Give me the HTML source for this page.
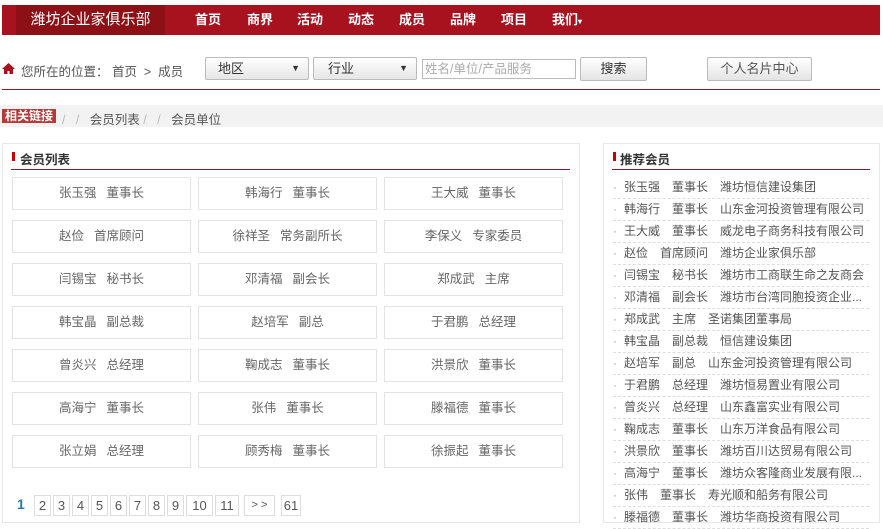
<!DOCTYPE html>
<html><head><meta charset="utf-8"><style>
*{margin:0;padding:0;box-sizing:border-box}
body{width:883px;height:517px;overflow:hidden;background:#fff;font-family:"Liberation Sans","Noto Sans CJK SC",sans-serif;font-size:12px;color:#555;position:relative}
.a{position:absolute}
.nav{left:2px;top:5px;width:878px;height:30px;background:#a8111e}
.logo{left:16px;top:5px;width:149px;height:30px;background:#8e1017;color:#fff;font-size:15px;line-height:30px;text-align:center}
.nav span{position:absolute;top:0;line-height:30px;color:#fff;font-size:13px;font-weight:bold}
.sel{top:57px;height:23px;border:1px solid #bbb;border-radius:2px;background:linear-gradient(#fff,#e6e6e6);font-size:13px;color:#333;line-height:21px;padding-left:12px}
.sel:after{content:"▼";position:absolute;right:8px;top:0;font-size:9px}
.btn{top:57px;height:24px;border:1px solid #bbb;border-radius:2px;background:linear-gradient(#fff,#e4e4e4);font-size:13px;color:#333;line-height:22px;text-align:center}
.cell{position:absolute;width:179px;height:33px;border:1px solid #e3e3e3;text-align:center;line-height:31px;font-size:12.5px;color:#666}
.cell b{font-weight:normal;margin-left:10px}
.li{position:absolute;left:613px;width:256px;height:22px;border-bottom:1px dashed #ddd;line-height:21px;font-size:12px;color:#555;white-space:nowrap;overflow:hidden}
.li i{font-style:normal;margin-right:7px;color:#999}
.pg{position:absolute;top:495px;height:21px;border:1px solid #ddd;font-size:13px;color:#555;line-height:19px;text-align:center}
</style></head><body>
<div class="a nav"></div>
<div class="a logo">潍坊企业家俱乐部</div>
<div class="a nav" style="background:none">
<span style="left:193px">首页</span><span style="left:245px">商界</span><span style="left:295px">活动</span><span style="left:346px">动态</span><span style="left:397px">成员</span><span style="left:448px">品牌</span><span style="left:499px">项目</span><span style="left:550px">我们<small style="font-size:8px">▾</small></span>
</div>
<svg class="a" style="left:2px;top:63px" width="13" height="11" viewBox="0 0 13 11"><path d="M6.5 0L0 6h2v5h3.5V8h2v3H11V6h2z" fill="#a8111e"/></svg>
<div class="a" style="left:21px;top:61px;font-size:12.5px;color:#555">您所在的位置： 首页 &nbsp;&gt;&nbsp; 成员</div>
<div class="a sel" style="left:205px;width:104px">地区</div>
<div class="a sel" style="left:313px;width:104px;padding-left:14px">行业</div>
<div class="a" style="left:422px;top:59px;width:154px;height:20px;border:1px solid #bbb;color:#aaa;font-size:12.5px;line-height:18px;padding-left:2px">姓名/单位/产品服务</div>
<div class="a btn" style="left:580px;width:67px">搜索</div>
<div class="a btn" style="left:707px;width:105px;color:#555">个人名片中心</div>
<div class="a" style="left:2px;top:89px;width:878px;height:1px;background:#8c1a2a"></div>
<div class="a" style="left:0;top:105px;width:883px;height:22px;background:#f2f2f2"></div>
<div class="a" style="left:2px;top:109px;width:54px;height:14px;background:#b53a3a;color:#fff;font-size:12px;line-height:14px;text-align:center;font-weight:bold">相关链接</div>
<div class="a" style="left:62px;top:109px;color:#bbb;font-size:12.5px">/ &nbsp; / &nbsp; <span style="color:#555">会员列表</span> / &nbsp; / &nbsp; <span style="color:#555">会员单位</span></div>

<div class="a" style="left:2px;top:143px;width:578px;height:380px;border:1px solid #e8e8e8"></div>
<div class="a" style="left:12px;top:152px;width:3px;height:9px;background:#c00"></div>
<div class="a" style="left:20px;top:149px;font-size:12.5px;font-weight:bold;color:#333">会员列表</div>
<div class="a" style="left:11px;top:169px;width:559px;height:1px;background:#8c1a2a"></div>

<div class="cell" style="left:12px;top:177px">张玉强<b>董事长</b></div>
<div class="cell" style="left:198px;top:177px">韩海行<b>董事长</b></div>
<div class="cell" style="left:384px;top:177px">王大威<b>董事长</b></div>
<div class="cell" style="left:12px;top:220px">赵俭<b>首席顾问</b></div>
<div class="cell" style="left:198px;top:220px">徐祥圣<b>常务副所长</b></div>
<div class="cell" style="left:384px;top:220px">李保义<b>专家委员</b></div>
<div class="cell" style="left:12px;top:263px">闫锡宝<b>秘书长</b></div>
<div class="cell" style="left:198px;top:263px">邓清福<b>副会长</b></div>
<div class="cell" style="left:384px;top:263px">郑成武<b>主席</b></div>
<div class="cell" style="left:12px;top:306px">韩宝晶<b>副总裁</b></div>
<div class="cell" style="left:198px;top:306px">赵培军<b>副总</b></div>
<div class="cell" style="left:384px;top:306px">于君鹏<b>总经理</b></div>
<div class="cell" style="left:12px;top:349px">曾炎兴<b>总经理</b></div>
<div class="cell" style="left:198px;top:349px">鞠成志<b>董事长</b></div>
<div class="cell" style="left:384px;top:349px">洪景欣<b>董事长</b></div>
<div class="cell" style="left:12px;top:392px">高海宁<b>董事长</b></div>
<div class="cell" style="left:198px;top:392px">张伟<b>董事长</b></div>
<div class="cell" style="left:384px;top:392px">滕福德<b>董事长</b></div>
<div class="cell" style="left:12px;top:435px">张立娟<b>总经理</b></div>
<div class="cell" style="left:198px;top:435px">顾秀梅<b>董事长</b></div>
<div class="cell" style="left:384px;top:435px">徐振起<b>董事长</b></div>

<div class="a" style="left:17px;top:496px;font-size:14px;font-weight:bold;color:#2a7ab0">1</div>
<div class="pg" style="left:34px;width:17px">2</div>
<div class="pg" style="left:53px;width:17px">3</div>
<div class="pg" style="left:72px;width:17px">4</div>
<div class="pg" style="left:91px;width:17px">5</div>
<div class="pg" style="left:110px;width:17px">6</div>
<div class="pg" style="left:129px;width:17px">7</div>
<div class="pg" style="left:148px;width:17px">8</div>
<div class="pg" style="left:167px;width:17px">9</div>
<div class="pg" style="left:186px;width:27px">10</div>
<div class="pg" style="left:215px;width:24px">11</div>
<div class="pg" style="left:244px;width:31px;font-size:11px">&gt; &gt;</div>
<div class="pg" style="left:281px;width:20px">61</div>

<div class="a" style="left:603px;top:143px;width:277px;height:380px;border:1px solid #e8e8e8"></div>
<div class="a" style="left:613px;top:152px;width:3px;height:9px;background:#c00"></div>
<div class="a" style="left:620px;top:149px;font-size:12.5px;font-weight:bold;color:#333">推荐会员</div>
<div class="a" style="left:612px;top:169px;width:258px;height:1px;background:#8c1a2a"></div>

<div class="li" style="top:177px"><i>·</i>张玉强　董事长　潍坊恒信建设集团</div>
<div class="li" style="top:199px"><i>·</i>韩海行　董事长　山东金河投资管理有限公司</div>
<div class="li" style="top:221px"><i>·</i>王大威　董事长　威龙电子商务科技有限公司</div>
<div class="li" style="top:243px"><i>·</i>赵俭　首席顾问　潍坊企业家俱乐部</div>
<div class="li" style="top:265px"><i>·</i>闫锡宝　秘书长　潍坊市工商联生命之友商会</div>
<div class="li" style="top:287px"><i>·</i>邓清福　副会长　潍坊市台湾同胞投资企业...</div>
<div class="li" style="top:309px"><i>·</i>郑成武　主席　圣诺集团董事局</div>
<div class="li" style="top:331px"><i>·</i>韩宝晶　副总裁　恒信建设集团</div>
<div class="li" style="top:353px"><i>·</i>赵培军　副总　山东金河投资管理有限公司</div>
<div class="li" style="top:375px"><i>·</i>于君鹏　总经理　潍坊恒易置业有限公司</div>
<div class="li" style="top:397px"><i>·</i>曾炎兴　总经理　山东鑫富实业有限公司</div>
<div class="li" style="top:419px"><i>·</i>鞠成志　董事长　山东万洋食品有限公司</div>
<div class="li" style="top:441px"><i>·</i>洪景欣　董事长　潍坊百川达贸易有限公司</div>
<div class="li" style="top:463px"><i>·</i>高海宁　董事长　潍坊众客隆商业发展有限...</div>
<div class="li" style="top:485px"><i>·</i>张伟　董事长　寿光顺和船务有限公司</div>
<div class="li" style="top:507px"><i>·</i>滕福德　董事长　潍坊华商投资有限公司</div>
</body></html>
